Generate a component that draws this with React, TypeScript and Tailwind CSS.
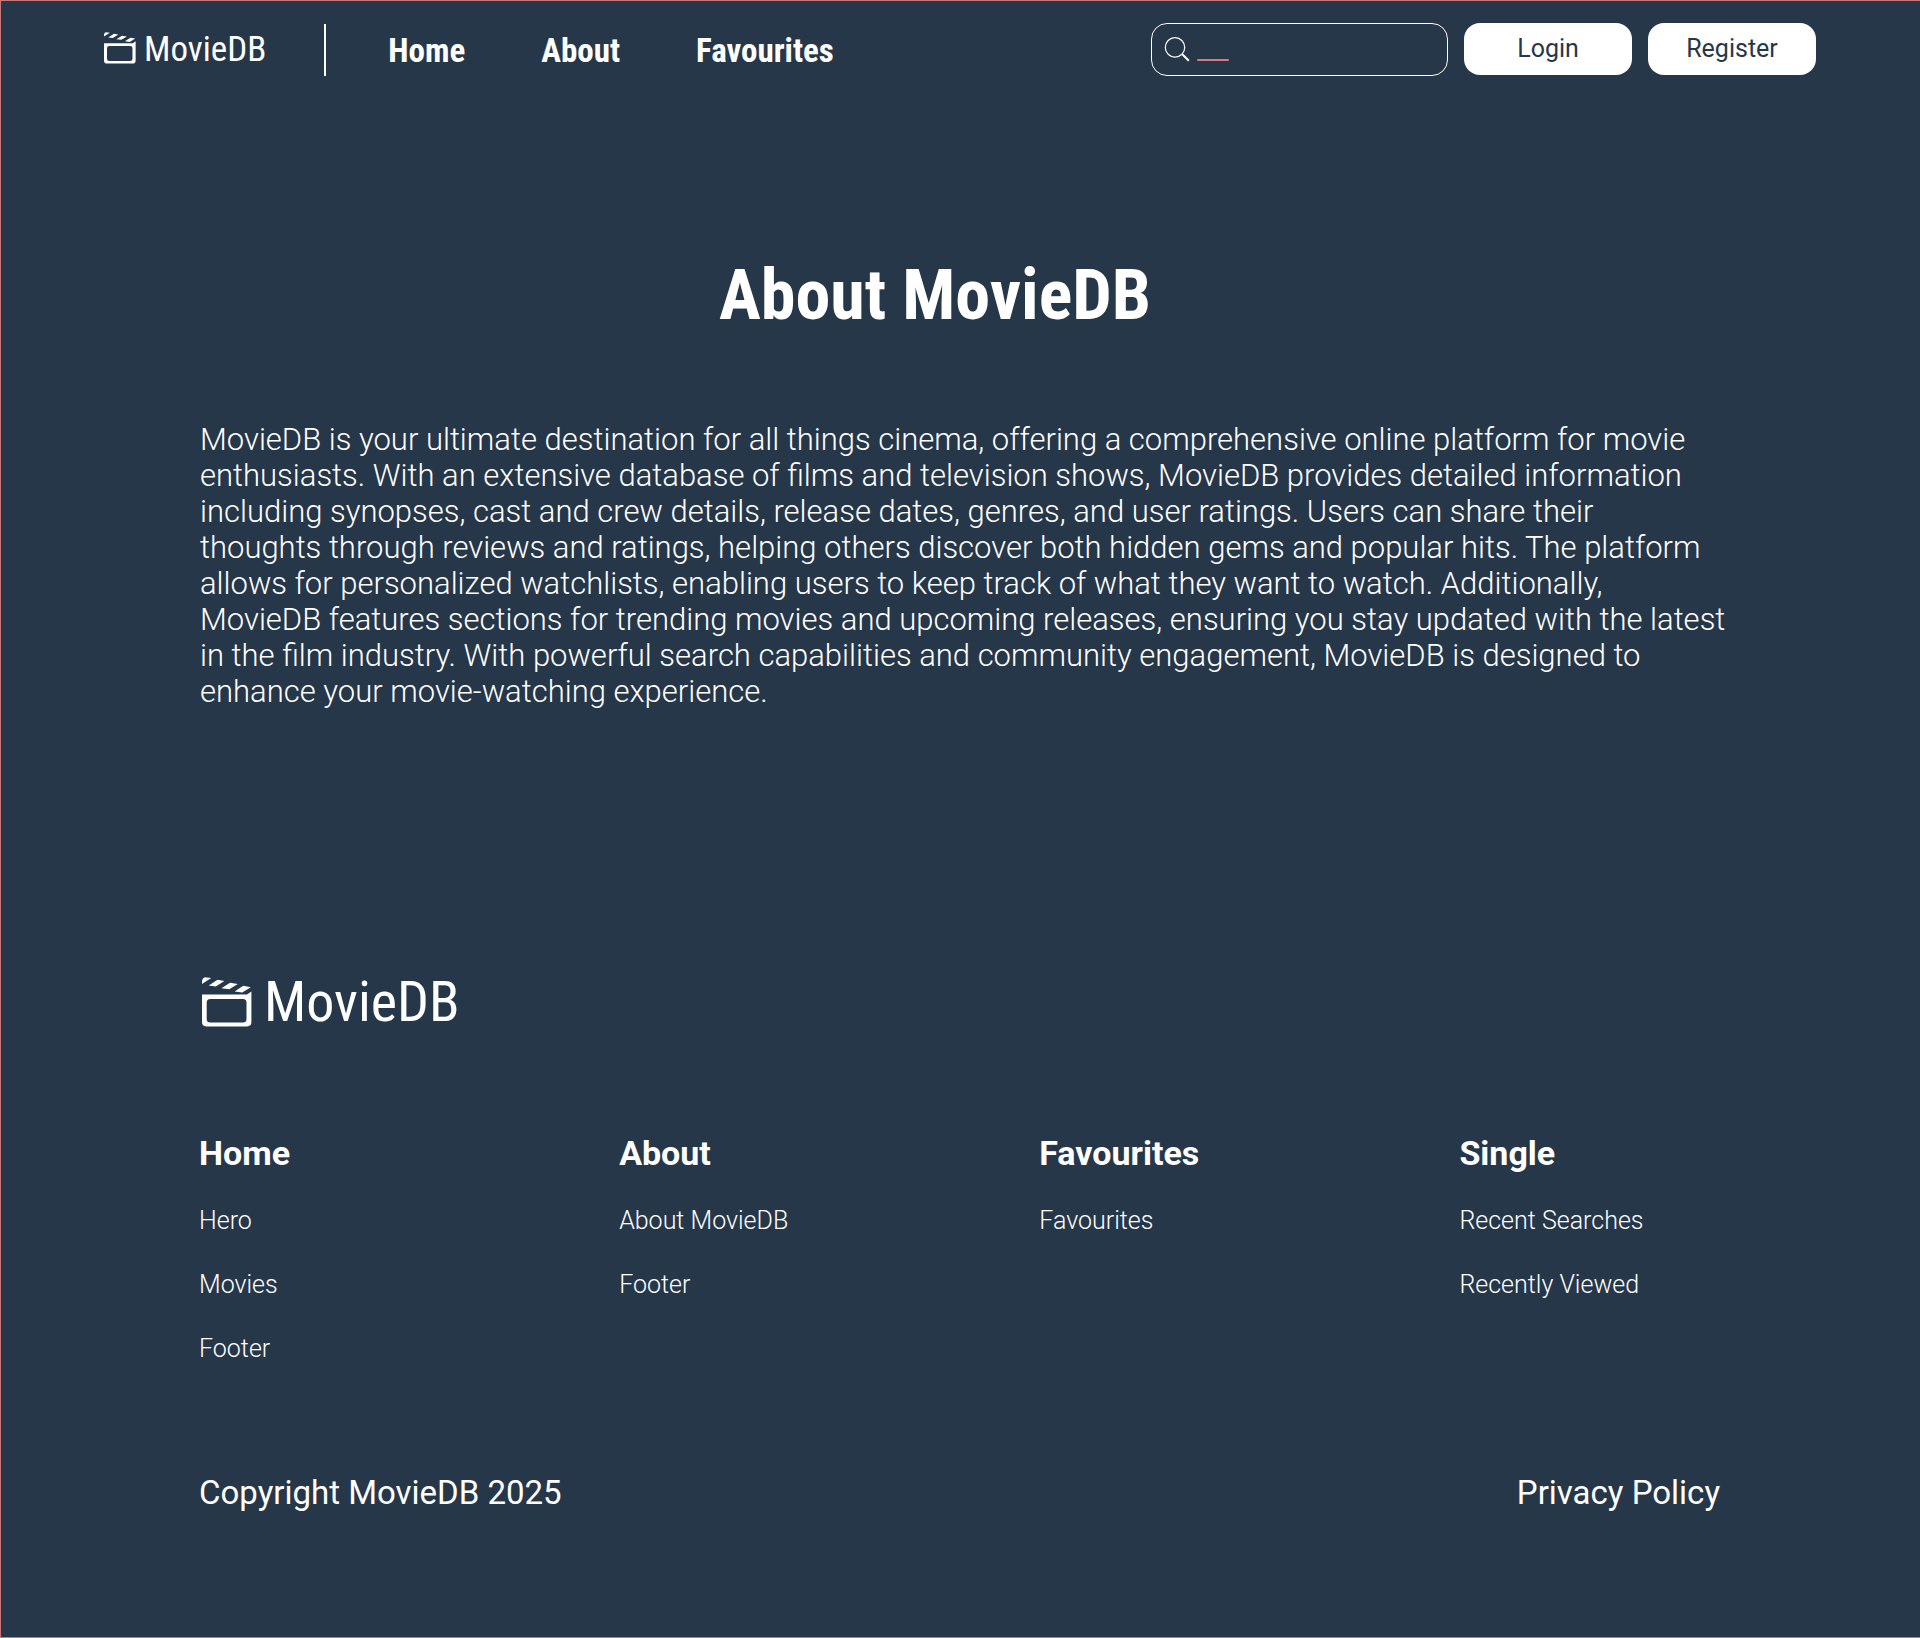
import { Fragment } from "react";

const display = "font-['Roboto_Condensed','Roboto',sans-serif]";

function ClapperIcon({ className }: { className: string }) {
  return (
    <svg viewBox="0 0 50 50" fill="currentColor" aria-hidden="true" className={className}>
      <path d="M0 7V3.5Q0.6 1.2 2.8 0.3L9.2 1.1Z" />
      <path d="M6.7 8.5 15.5 2.7 22.4 4 13.8 9.4Z" />
      <path d="M19.4 11.2 28 5.7 35.8 7 27.2 12.2Z" />
      <path d="M32.6 14.4 41.3 8.8 48.8 10.2 40.2 15.6Z" />
      <path
        fillRule="evenodd"
        d="M0 17.5H45L49.4 14.6V45Q49.4 49.4 45 49.4H4.4Q0 49.4 0 45ZM8.2 22Q4.7 22 4.7 25.5V41.9Q4.7 45.4 8.2 45.4H41Q44.5 45.4 44.5 41.9V25.5Q44.5 22 41 22Z"
      />
    </svg>
  );
}

const aboutLines = [
  "MovieDB is your ultimate destination for all things cinema, offering a comprehensive online platform for movie",
  "enthusiasts. With an extensive database of films and television shows, MovieDB provides detailed information",
  "including synopses, cast and crew details, release dates, genres, and user ratings. Users can share their",
  "thoughts through reviews and ratings, helping others discover both hidden gems and popular hits. The platform",
  "allows for personalized watchlists, enabling users to keep track of what they want to watch. Additionally,",
  "MovieDB features sections for trending movies and upcoming releases, ensuring you stay updated with the latest",
  "in the film industry. With powerful search capabilities and community engagement, MovieDB is designed to",
  "enhance your movie-watching experience.",
];

const columns = [
  { title: "Home", links: ["Hero", "Movies", "Footer"] },
  { title: "About", links: ["About MovieDB", "Footer"] },
  { title: "Favourites", links: ["Favourites"] },
  { title: "Single", links: ["Recent Searches", "Recently Viewed"] },
];

function Header() {
  return (
    <header className="flex items-center justify-between pt-[22px] pr-[104px] pb-6 pl-[103px]">
      <div className="flex items-center">
        <a href="#" className="mr-[58px] flex items-start gap-2">
          <ClapperIcon className="mt-1 size-8" />
          <span className={`${display} text-[35px] leading-[44px]`}>MovieDB</span>
        </a>
        <div className="h-[52px] w-0.5 bg-white" />
        <nav className={`${display} ml-[62px] flex gap-[76px] pt-0.5 text-[33px] leading-10 font-bold`}>
          <a href="#home">Home</a>
          <a href="#about">About</a>
          <a href="#favourites">Favourites</a>
        </nav>
      </div>
      <div className="flex gap-4">
        <label className="relative flex h-[53px] w-[297px] items-center rounded-2xl border border-white pl-3">
          <svg viewBox="0 0 26 26" fill="none" stroke="currentColor" aria-hidden="true" className="size-[26px] shrink-0">
            <circle cx="11" cy="10.4" r="9.7" strokeWidth="1.2" />
            <path d="M18 17 24.8 23.8" strokeWidth="2" />
          </svg>
          <input type="search" aria-label="Search movies" className="h-full min-w-0 flex-1 bg-transparent px-2 text-2xl outline-none" />
          <span className="absolute bottom-[14px] left-[45px] h-0.5 w-8 rounded-full bg-[#d67c7c]" />
        </label>
        <button className="h-[52px] w-[168px] rounded-2xl bg-white text-[25px] leading-8 text-[#263749]">Login</button>
        <button className="h-[52px] w-[168px] rounded-2xl bg-white text-[25px] leading-8 text-[#263749]">Register</button>
      </div>
    </header>
  );
}

export default function App() {
  return (
    <div className="min-h-screen border-t border-b border-l border-[#c87678] bg-[#263749] font-['Roboto',sans-serif] text-white">
      <Header />
      <main id="about" className="pt-[153px] pr-[180px] pl-[199px]">
        <h1 className={`${display} pr-[70px] text-center text-[70px] leading-[84px] font-bold`}>About MovieDB</h1>
        <p className="mt-[85px] text-[31px] leading-9 font-light">
          {aboutLines.map((line, i) => (
            <Fragment key={line}>
              {i > 0 && <br />}
              {line}
            </Fragment>
          ))}
        </p>
      </main>
      <footer className="px-[198px] pt-[262px] pb-[124px]">
        <a href="#" className="flex items-center gap-3 pl-[3px]">
          <ClapperIcon className="size-[50px]" />
          <span className={`${display} text-[56px] leading-[60px]`}>MovieDB</span>
        </a>
        <div className="mt-[101px] grid grid-cols-[8fr_8fr_8fr_5fr]">
          {columns.map((column) => (
            <section key={column.title}>
              <h2 className="text-[34px] leading-10 font-bold">{column.title}</h2>
              <ul className="mt-8 flex flex-col gap-8 text-[25px] leading-8 font-light">
                {column.links.map((link) => (
                  <li key={link}>
                    <a href="#">{link}</a>
                  </li>
                ))}
              </ul>
            </section>
          ))}
        </div>
        <div className="mt-[108px] flex justify-between pr-0.5 text-[33px] leading-10">
          <p>Copyright MovieDB 2025</p>
          <a href="#">Privacy Policy</a>
        </div>
      </footer>
    </div>
  );
}
